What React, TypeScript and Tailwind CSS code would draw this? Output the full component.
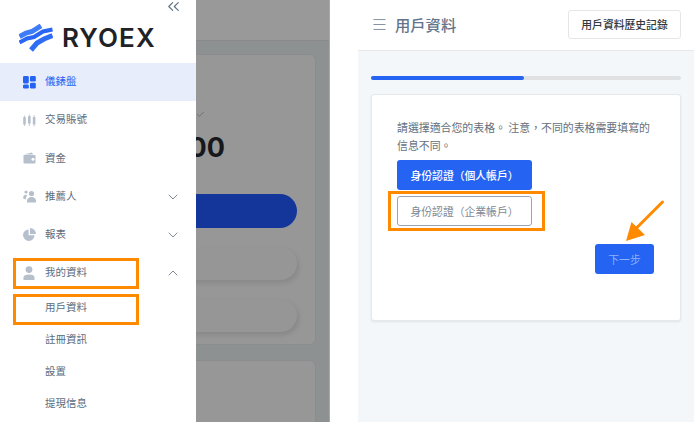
import { ChevronDown, ChevronUp, ChevronsLeft, Menu, Check } from "lucide-react";

const cjk = "font-['Noto_Sans_CJK_TC','Noto_Sans_CJK_SC',sans-serif]";

function LogoMark() {
  return (
    <svg width="34" height="28" viewBox="0 0 34 28" fill="none" className="shrink-0">
      <path d="M0.5 12.5 L7 9 L13 7.5 L22 1.8" stroke="#3f7cf7" strokeWidth="5" />
      <path d="M0.5 18.5 L8 14.5 L15 13 L24 7.5 L33.5 5.5" stroke="#2a66f4" strokeWidth="4" />
      <path d="M12 26 L18 19 L25 15 L33.5 11.5" stroke="#2f6df5" strokeWidth="5" />
    </svg>
  );
}

function IconDashboard() {
  return (
    <svg width="13" height="13" viewBox="0 0 13 13" fill="#2563f2">
      <rect x="0" y="0" width="5.8" height="7.4" rx="1.3" />
      <rect x="7" y="0" width="5.8" height="5.6" rx="1.3" />
      <rect x="0" y="8.6" width="5.8" height="4" rx="1.3" />
      <rect x="7" y="6.8" width="5.8" height="5.8" rx="1.3" />
    </svg>
  );
}

function IconCandles() {
  return (
    <svg width="13" height="13" viewBox="0 0 13 13" fill="#b6c0cc">
      <rect x="0.2" y="3" width="2.6" height="7.5" rx="0.6" />
      <rect x="1.1" y="1.5" width="0.8" height="10.5" />
      <rect x="5" y="2" width="2.6" height="7.5" rx="0.6" />
      <rect x="5.9" y="0.5" width="0.8" height="11.5" />
      <rect x="9.8" y="3" width="2.6" height="7.5" rx="0.6" />
      <rect x="10.7" y="1" width="0.8" height="11.5" />
    </svg>
  );
}

function IconWallet() {
  return (
    <svg width="13" height="12" viewBox="0 0 13 12" fill="#b6c0cc">
      <path d="M1 2.5 L9 0.6 L10 2.5Z" />
      <path d="M0.5 3 H11.5 A1 1 0 0 1 12.5 4 V10.5 A1 1 0 0 1 11.5 11.5 H1.5 A1 1 0 0 1 0.5 10.5Z" />
      <circle cx="10" cy="7.2" r="1.5" fill="#fff" />
    </svg>
  );
}

function IconUsers() {
  return (
    <svg width="14" height="13" viewBox="0 0 14 13" fill="#b6c0cc">
      <circle cx="3" cy="2" r="1.6" />
      <circle cx="8.5" cy="3.5" r="2.6" />
      <path d="M4 12.5 C3.5 8.5 6 7 8.5 7 C11 7 13.5 8.5 13 12.5Z" />
      <path d="M0.2 8 C0 5.5 1.5 4.8 3 4.8 L4.4 5.4 C3.2 6.4 2.8 7.6 2.8 9.4 C1.6 9.4 0.6 9 0.2 8Z" />
    </svg>
  );
}

function IconPie() {
  return (
    <svg width="13" height="13" viewBox="0 0 13 13" fill="#b6c0cc">
      <path d="M5.6 1.4 V7.2 H11.6 A5.8 5.8 0 1 1 5.6 1.4Z" />
      <path d="M7 0 A6 6 0 0 1 13 6 H7Z" />
    </svg>
  );
}

function IconUser() {
  return (
    <svg width="12" height="14" viewBox="0 0 12 14" fill="#b6c0cc">
      <circle cx="6" cy="3.6" r="3.4" />
      <path d="M0.5 14 V11.5 C0.5 9.5 2.5 8.4 6 8.4 C9.5 8.4 11.5 9.5 11.5 11.5 V14Z" />
    </svg>
  );
}

const menu = [
  { label: "儀錶盤", icon: <IconDashboard />, active: true },
  { label: "交易賬號", icon: <IconCandles /> },
  { label: "資金", icon: <IconWallet /> },
  { label: "推薦人", icon: <IconUsers />, caret: "down" },
  { label: "報表", icon: <IconPie />, caret: "down" },
  { label: "我的資料", icon: <IconUser />, caret: "up" },
];

const subMenu = ["用戶資料", "註冊資訊", "設置", "提現信息"];

function Sidebar() {
  return (
    <aside className="relative z-10 w-[196px] shrink-0 bg-white">
      <div className="flex justify-end pr-[13px] h-[2px]">
        <ChevronsLeft size={19} strokeWidth={1.4} className="shrink-0 -mt-[3px] text-[#5f6f80]" />
      </div>
      <div className="flex items-center gap-[9px] pl-[19px] pt-[21px] h-[61px] pb-[11px]">
        <LogoMark />
        <span className="font-['Inter',sans-serif] text-[26px] font-semibold leading-none text-[#1f2227] tracking-[1.1px]">
          RYOEX
        </span>
      </div>
      {menu.map((item) => (
        <div
          key={item.label}
          className={`flex h-[38.2px] items-center pl-[23px] pr-[15px] ${item.active ? "bg-[#e7edfb]" : ""}`}
        >
          <span className="flex w-[22px] shrink-0 items-center">{item.icon}</span>
          <span className={`${cjk} flex-1 pb-[2px] text-[10.5px] ${item.active ? "text-[#2563f2]" : "text-[#5d6d7e]"}`}>
            {item.label}
          </span>
          {item.caret === "down" && <ChevronDown size={16} strokeWidth={1.4} className="text-[#76818e]" />}
          {item.caret === "up" && <ChevronUp size={16} strokeWidth={1.4} className="text-[#76818e]" />}
        </div>
      ))}
      <div>
        {subMenu.map((label) => (
          <div key={label} className={`${cjk} flex h-[31.8px] items-center pb-[2px] pl-[45px] text-[10.5px] text-[#5d6d7e]`}>
            {label}
          </div>
        ))}
      </div>
      {/* annotation boxes */}
      <div className="absolute left-[13px] top-[258px] h-[31px] w-[126px] border-[3px] border-[#ff8a00]" />
      <div className="absolute left-[13px] top-[294px] h-[31px] w-[126px] border-[3px] border-[#ff8a00]" />
    </aside>
  );
}

function DimmedPage() {
  return (
    <div className="flex w-[134px] shrink-0 flex-col items-end overflow-hidden border-r border-[#a8a8a8] bg-[#8e9192]">
      <div className="h-[41px] w-full shrink-0 border-b border-[#8a8a8a] bg-[#999999]" />
      <div className="mt-[13px] mr-[13px] flex h-[291px] w-[160px] shrink-0 flex-col items-end rounded-[6px] border border-[#8a8c8d] bg-[#979797] pr-[18px]">
        <Check size={9} strokeWidth={2} className="mt-[55px] mr-[92px] text-[#5f6366]" />
        <div className="mt-[13px] mr-[72px] font-['Inter',sans-serif] text-[27px] font-bold leading-[32px] text-[#16181c]">
          00
        </div>
        <div className="mt-[30px] h-[34px] w-[150px] shrink-0 rounded-full bg-[#14359a]" />
        <div className="mt-[19px] h-[33px] w-[150px] shrink-0 rounded-full bg-[#969696] shadow-[2px_3px_5px_rgba(0,0,0,0.1)]" />
        <div className="mt-[19px] h-[33px] w-[150px] shrink-0 rounded-full bg-[#969696] shadow-[2px_3px_5px_rgba(0,0,0,0.1)]" />
      </div>
      <div className="mt-[15px] mr-[13px] h-[80px] w-[160px] shrink-0 rounded-[6px] border border-[#8a8c8d] bg-[#979797]" />
    </div>
  );
}

function ProfilePanel() {
  return (
    <main className="relative flex w-[336px] shrink-0 flex-col bg-[#f3f7fa]">
      <header className="flex h-[51px] shrink-0 items-center justify-between border-b border-[#e6e8ea] bg-white pb-[2px] pl-[13px] pr-[13px]">
        <div className="flex items-center gap-[7px]">
          <Menu size={17} strokeWidth={1.1} className="text-[#64748b]" />
          <h1 className={`${cjk} text-[15.3px] font-medium text-[#64748b]`}>用戶資料</h1>
        </div>
        <button className={`${cjk} h-[29px] w-[113px] rounded-[3px] border border-[#e4e7ea] bg-white text-[10.8px] font-medium text-[#33383e]`}>
          用戶資料歷史記錄
        </button>
      </header>

      <div className="px-[13px] pt-[25px]">
        <div className="h-[4px] w-[310px] rounded-full bg-[#dfe1e3]">
          <div className="h-full w-[153px] rounded-full bg-[#2563f2]" />
        </div>

        <section className="mt-[14px] flex h-[227px] w-[310px] flex-col rounded-[3px] border border-[#e6e9ec] bg-white pl-[25px] pr-[25px] pt-[24px] shadow-[0_1px_2px_rgba(0,0,0,0.08)]">
          <p className={`${cjk} text-[10.9px] leading-[17.5px] text-[#64707d]`}>
            {"請選擇適合您的表格。 注意\uFF0C不同的表格需要填寫的信息不同。"}
          </p>
          <button className={`${cjk} mt-[6px] h-[30px] w-[135px] rounded-[3px] bg-[#2563f2] text-[10.8px] font-medium text-white`}>
            {"身份認證\uFF08個人帳戶\uFF09"}
          </button>
          <button className={`${cjk} mt-[6px] h-[30px] w-[135px] rounded-[3px] border border-[#9aa5b1] bg-white text-[10.8px] text-[#7d8894]`}>
            {"身份認證\uFF08企業帳戶\uFF09"}
          </button>
          <button className={`${cjk} mt-[18px] ml-[198px] h-[30px] w-[59px] rounded-[3px] bg-[#2563f2] text-[10.8px] text-[#8fb0fa]`}>
            下一步
          </button>
        </section>
      </div>

      {/* annotations */}
      <div className="absolute left-[30px] top-[191px] h-[40px] w-[157px] border-[3px] border-[#ff8a00]" />
      <svg width="46" height="46" viewBox="0 0 46 46" className="absolute left-[264px] top-[197px]">
        <path d="M40.5 5 L14 31.5" stroke="#ff8a00" strokeWidth="3" strokeLinecap="round" />
        <path d="M4 44 L9.5 25 L23 38Z" fill="#ff8a00" />
      </svg>
    </main>
  );
}

export default function App() {
  return (
    <div className="flex h-[422px] w-[694px] overflow-hidden bg-white">
      <Sidebar />
      <DimmedPage />
      <div className="w-[28px] shrink-0 bg-white" />
      <ProfilePanel />
    </div>
  );
}
